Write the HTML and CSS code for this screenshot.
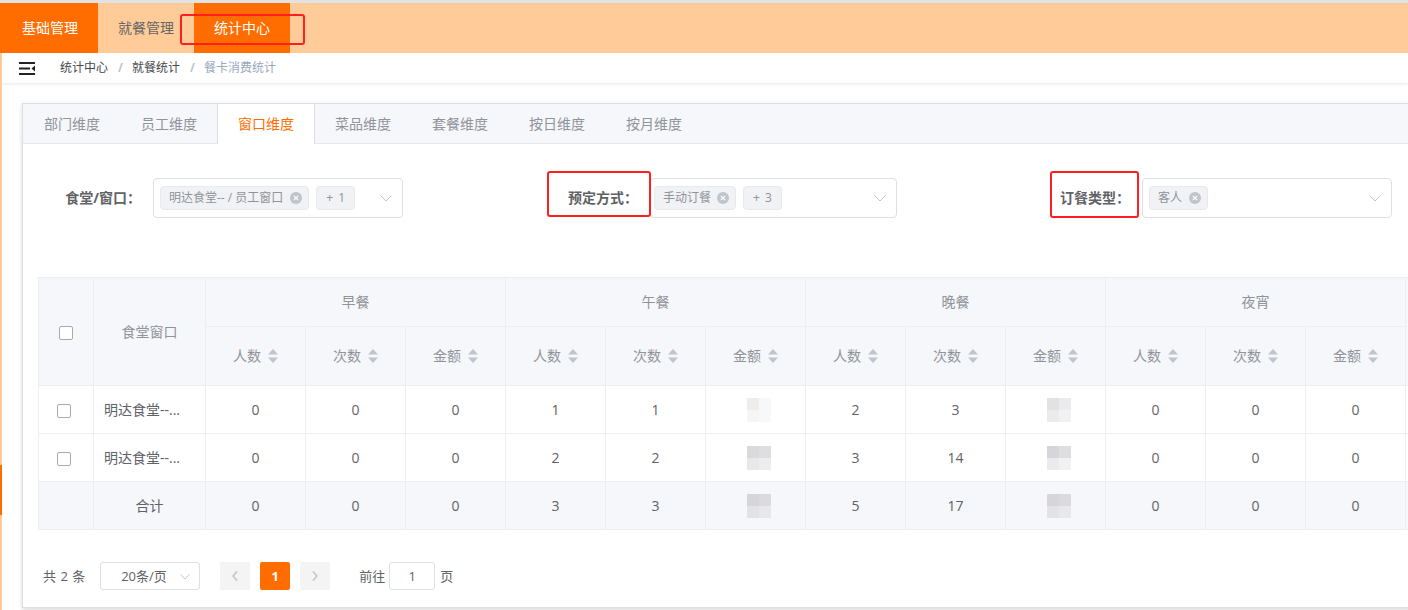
FILE: index.html
```html
<!DOCTYPE html>
<html lang="zh-CN">
<head>
<meta charset="utf-8">
<title>餐卡消费统计</title>
<link rel="stylesheet" href="styles.css">
</head>
<body>
<header class="topbar">
  <nav class="topnav">
    <a class="nav-item active">基础管理</a>
    <a class="nav-item">就餐管理</a>
    <a class="nav-item active">统计中心<span class="mark mark-nav"></span></a>
  </nav>
</header>
<div class="layout">
  <aside class="sidebar"><span class="sidebar-active"></span></aside>
  <main class="main">
    <div class="navbar">
      <svg class="hamburger" viewBox="0 0 16 13" width="16" height="13">
        <rect x="0" y="0" width="16" height="2" fill="#222"/>
        <rect x="0" y="5.5" width="11" height="2" fill="#222"/>
        <polygon points="16,3.5 12.5,6.5 16,9.5" fill="#222"/>
        <rect x="0" y="11" width="16" height="2" fill="#222"/>
      </svg>
      <div class="breadcrumb">
        <span class="crumb">统计中心</span><span class="sep">/</span>
        <span class="crumb">就餐统计</span><span class="sep">/</span>
        <span class="crumb last">餐卡消费统计</span>
      </div>
    </div>
    <div class="app-main">
      <div class="card">
        <div class="tabs-header">
          <div class="tab">部门维度</div>
          <div class="tab">员工维度</div>
          <div class="tab active">窗口维度</div>
          <div class="tab">菜品维度</div>
          <div class="tab">套餐维度</div>
          <div class="tab">按日维度</div>
          <div class="tab">按月维度</div>
        </div>
        <div class="tabs-content">
          <div class="filters">
            <div class="form-item">
              <label class="form-label">食堂/窗口：</label>
              <div class="select">
                <span class="tag">明达食堂-- / 员工窗口<svg class="tag-close" viewBox="0 0 12 12" width="12" height="12"><circle cx="6" cy="6" r="6" fill="#c0c4cc"/><path d="M3.8 3.8 L8.2 8.2 M8.2 3.8 L3.8 8.2" stroke="#fff" stroke-width="1.2"/></svg></span>
                <span class="tag tag-count">+ 1</span>
                <svg class="arrow" viewBox="0 0 12 7" width="12" height="7"><polyline points="0.5,0.5 6,6 11.5,0.5" fill="none" stroke="#c0c4cc" stroke-width="1"/></svg>
              </div>
            </div>
            <div class="form-item">
              <label class="form-label">预定方式：</label>
              <div class="select narrow">
                <span class="tag tag-tight">手动订餐<svg class="tag-close" viewBox="0 0 12 12" width="12" height="12"><circle cx="6" cy="6" r="6" fill="#c0c4cc"/><path d="M3.8 3.8 L8.2 8.2 M8.2 3.8 L3.8 8.2" stroke="#fff" stroke-width="1.2"/></svg></span>
                <span class="tag tag-count">+ 3</span>
                <svg class="arrow" viewBox="0 0 12 7" width="12" height="7"><polyline points="0.5,0.5 6,6 11.5,0.5" fill="none" stroke="#c0c4cc" stroke-width="1"/></svg>
              </div>
              <span class="mark mark-2"></span>
            </div>
            <div class="form-item">
              <label class="form-label">订餐类型：</label>
              <div class="select">
                <span class="tag">客人<svg class="tag-close" viewBox="0 0 12 12" width="12" height="12"><circle cx="6" cy="6" r="6" fill="#c0c4cc"/><path d="M3.8 3.8 L8.2 8.2 M8.2 3.8 L3.8 8.2" stroke="#fff" stroke-width="1.2"/></svg></span>
                <svg class="arrow" viewBox="0 0 12 7" width="12" height="7"><polyline points="0.5,0.5 6,6 11.5,0.5" fill="none" stroke="#c0c4cc" stroke-width="1"/></svg>
              </div>
              <span class="mark mark-3"></span>
            </div>
          </div>

          <div class="table-wrap">
            <table class="data-table">
              <colgroup>
                <col class="w-check"><col class="w-name">
                <col class="w-num"><col class="w-num"><col class="w-num">
                <col class="w-num"><col class="w-num"><col class="w-num">
                <col class="w-num"><col class="w-num"><col class="w-num">
                <col class="w-num"><col class="w-num"><col class="w-num">
                <col class="w-num">
              </colgroup>
              <thead>
                <tr class="hrow1">
                  <th rowspan="2"><span class="checkbox"></span></th>
                  <th rowspan="2">食堂窗口</th>
                  <th colspan="3">早餐</th>
                  <th colspan="3">午餐</th>
                  <th colspan="3">晚餐</th>
                  <th colspan="3">夜宵</th>
                  <th rowspan="2"></th>
                </tr>
                <tr class="hrow2">
                  <th><span class="sortable">人数<svg class="caret" viewBox="0 0 10 14" width="10" height="14"><polygon points="5,0 10,5.5 0,5.5" fill="#c0c4cc"/><polygon points="0,8.5 10,8.5 5,14" fill="#c0c4cc"/></svg></span></th>
                  <th><span class="sortable">次数<svg class="caret" viewBox="0 0 10 14" width="10" height="14"><polygon points="5,0 10,5.5 0,5.5" fill="#c0c4cc"/><polygon points="0,8.5 10,8.5 5,14" fill="#c0c4cc"/></svg></span></th>
                  <th><span class="sortable">金额<svg class="caret" viewBox="0 0 10 14" width="10" height="14"><polygon points="5,0 10,5.5 0,5.5" fill="#c0c4cc"/><polygon points="0,8.5 10,8.5 5,14" fill="#c0c4cc"/></svg></span></th>
                  <th><span class="sortable">人数<svg class="caret" viewBox="0 0 10 14" width="10" height="14"><polygon points="5,0 10,5.5 0,5.5" fill="#c0c4cc"/><polygon points="0,8.5 10,8.5 5,14" fill="#c0c4cc"/></svg></span></th>
                  <th><span class="sortable">次数<svg class="caret" viewBox="0 0 10 14" width="10" height="14"><polygon points="5,0 10,5.5 0,5.5" fill="#c0c4cc"/><polygon points="0,8.5 10,8.5 5,14" fill="#c0c4cc"/></svg></span></th>
                  <th><span class="sortable">金额<svg class="caret" viewBox="0 0 10 14" width="10" height="14"><polygon points="5,0 10,5.5 0,5.5" fill="#c0c4cc"/><polygon points="0,8.5 10,8.5 5,14" fill="#c0c4cc"/></svg></span></th>
                  <th><span class="sortable">人数<svg class="caret" viewBox="0 0 10 14" width="10" height="14"><polygon points="5,0 10,5.5 0,5.5" fill="#c0c4cc"/><polygon points="0,8.5 10,8.5 5,14" fill="#c0c4cc"/></svg></span></th>
                  <th><span class="sortable">次数<svg class="caret" viewBox="0 0 10 14" width="10" height="14"><polygon points="5,0 10,5.5 0,5.5" fill="#c0c4cc"/><polygon points="0,8.5 10,8.5 5,14" fill="#c0c4cc"/></svg></span></th>
                  <th><span class="sortable">金额<svg class="caret" viewBox="0 0 10 14" width="10" height="14"><polygon points="5,0 10,5.5 0,5.5" fill="#c0c4cc"/><polygon points="0,8.5 10,8.5 5,14" fill="#c0c4cc"/></svg></span></th>
                  <th><span class="sortable">人数<svg class="caret" viewBox="0 0 10 14" width="10" height="14"><polygon points="5,0 10,5.5 0,5.5" fill="#c0c4cc"/><polygon points="0,8.5 10,8.5 5,14" fill="#c0c4cc"/></svg></span></th>
                  <th><span class="sortable">次数<svg class="caret" viewBox="0 0 10 14" width="10" height="14"><polygon points="5,0 10,5.5 0,5.5" fill="#c0c4cc"/><polygon points="0,8.5 10,8.5 5,14" fill="#c0c4cc"/></svg></span></th>
                  <th><span class="sortable">金额<svg class="caret" viewBox="0 0 10 14" width="10" height="14"><polygon points="5,0 10,5.5 0,5.5" fill="#c0c4cc"/><polygon points="0,8.5 10,8.5 5,14" fill="#c0c4cc"/></svg></span></th>
                </tr>
              </thead>
              <tbody>
                <tr>
                  <td class="cell-check"><span class="checkbox"></span></td>
                  <td class="cell-name">明达食堂--...</td>
                  <td>0</td><td>0</td><td>0</td>
                  <td>1</td><td>1</td>
                  <td><span class="mosaic"><i class="px c1"></i><i class="px c2"></i><i class="px c3"></i><i class="px c2"></i></span></td>
                  <td>2</td><td>3</td>
                  <td><span class="mosaic"><i class="px c4"></i><i class="px c5"></i><i class="px c5"></i><i class="px c6"></i></span></td>
                  <td>0</td><td>0</td><td>0</td>
                  <td></td>
                </tr>
                <tr>
                  <td class="cell-check"><span class="checkbox"></span></td>
                  <td class="cell-name">明达食堂--...</td>
                  <td>0</td><td>0</td><td>0</td>
                  <td>2</td><td>2</td>
                  <td><span class="mosaic"><i class="px c7"></i><i class="px c8"></i><i class="px c9"></i><i class="px c10"></i></span></td>
                  <td>3</td><td>14</td>
                  <td><span class="mosaic"><i class="px c11"></i><i class="px c8"></i><i class="px c5"></i><i class="px c6"></i></span></td>
                  <td>0</td><td>0</td><td>0</td>
                  <td></td>
                </tr>
                <tr class="sum-row">
                  <td></td>
                  <td>合计</td>
                  <td>0</td><td>0</td><td>0</td>
                  <td>3</td><td>3</td>
                  <td><span class="mosaic"><i class="px c11"></i><i class="px c12"></i><i class="px c13"></i><i class="px c14"></i></span></td>
                  <td>5</td><td>17</td>
                  <td><span class="mosaic"><i class="px c11"></i><i class="px c12"></i><i class="px c13"></i><i class="px c14"></i></span></td>
                  <td>0</td><td>0</td><td>0</td>
                  <td></td>
                </tr>
              </tbody>
            </table>
          </div>

          <div class="pagination">
            <span class="total">共 2 条</span>
            <div class="sizes">20条/页<svg class="arrow-sm" viewBox="0 0 10 6" width="10" height="6"><polyline points="0.5,0.5 5,5 9.5,0.5" fill="none" stroke="#c0c4cc" stroke-width="1"/></svg></div>
            <button class="pg-btn" type="button"><svg viewBox="0 0 6 10" width="6" height="10"><polyline points="5,0.5 1,5 5,9.5" fill="none" stroke="#c0c4cc" stroke-width="1.6"/></svg></button>
            <span class="pg-num active">1</span>
            <button class="pg-btn" type="button"><svg viewBox="0 0 6 10" width="6" height="10"><polyline points="1,0.5 5,5 1,9.5" fill="none" stroke="#c0c4cc" stroke-width="1.6"/></svg></button>
            <span class="jump">前往</span>
            <span class="jump-input">1</span>
            <span class="jump-unit">页</span>
          </div>
        </div>
      </div>
    </div>
  </main>
</div>
</body>
</html>
```

FILE: styles.css
```css
* { box-sizing: border-box; }

html, body {
  margin: 0;
  padding: 0;
  width: 1408px;
  height: 610px;
  overflow: hidden;
}

body {
  font-family: "Open Sans", "Noto Sans CJK SC", sans-serif;
  font-size: 14px;
  color: #606266;
  background: #fff;
}

/* ---------- top bar ---------- */
.topbar {
  height: 53px;
  border-top: 3px solid #e2e2e2;
  background: #ffcc99;
}

.topnav {
  display: flex;
  height: 50px;
}

.nav-item {
  position: relative;
  display: flex;
  align-items: center;
  height: 50px;
  padding: 0 20px;
  color: #666;
  font-size: 14px;
  line-height: 20px;
  text-decoration: none;
}

.nav-item:first-child { padding-left: 22px; }

.nav-item.active {
  background: #ff6d00;
  color: #fff;
}

.mark {
  position: absolute;
  border: 2px solid #ff1f1f;
  border-radius: 3px;
  pointer-events: none;
}

.mark-nav {
  left: -14px;
  right: -15px;
  top: 11px;
  height: 31px;
}

/* ---------- layout ---------- */
.layout {
  display: flex;
  height: 557px;
}

.sidebar {
  flex: none;
  width: 2px;
  background: #ffcc99;
  padding-top: 412px;
}

.sidebar-active {
  display: block;
  height: 50px;
  background: #ff6d00;
}

.main {
  flex: 1;
  min-width: 0;
  overflow: hidden;
}

.navbar {
  position: relative;
  display: flex;
  align-items: center;
  height: 30px;
  background: #fff;
  box-shadow: 0 1px 3px rgba(0, 21, 41, 0.10);
}

.hamburger {
  flex: none;
  margin-left: 17px;
  display: block;
}

.breadcrumb {
  display: flex;
  align-items: center;
  margin-left: 25px;
  font-size: 12px;
  line-height: 16px;
}

.crumb { color: #45474c; }
.crumb.last { color: #97a8be; }

.sep {
  margin: 0 9px 0 10px;
  color: #c0c4cc;
  font-weight: 700;
}

.app-main {
  padding: 20px 0 0 20px;
}

/* ---------- card / tabs ---------- */
.card {
  width: 1420px;
  height: 505px;
  background: #fff;
  border: 1px solid #dcdfe6;
  box-shadow: 0 2px 4px 0 rgba(0, 0, 0, 0.12), 0 0 6px 0 rgba(0, 0, 0, 0.04);
}

.tabs-header {
  display: flex;
  height: 40px;
  background: #f5f7fa;
  border-bottom: 1px solid #e4e7ed;
}

.tab {
  height: 40px;
  line-height: 39px;
  padding: 0 20px;
  margin-left: -1px;
  border-left: 1px solid transparent;
  border-right: 1px solid transparent;
  color: #909399;
  font-size: 14px;
}

.tab:first-child { margin-left: 0; }

.tab.active {
  background: #fff;
  color: #ff6d00;
  border-left-color: #dcdfe6;
  border-right-color: #dcdfe6;
}

.tabs-content {
  padding: 15px;
}

/* ---------- filters ---------- */
.filters {
  display: grid;
  grid-template-columns: 497px 492px 360px;
  margin-top: 19px;
  padding-left: 15px;
  height: 40px;
}

.form-item {
  position: relative;
  display: flex;
  align-items: center;
  height: 40px;
}

.form-label {
  flex: none;
  width: 100px;
  padding-right: 12px;
  text-align: right;
  font-weight: 700;
  color: #606266;
  font-size: 14px;
  line-height: 20px;
}

.select {
  position: relative;
  flex: none;
  display: flex;
  align-items: center;
  gap: 7px;
  width: 250px;
  height: 40px;
  padding-left: 6px;
  border: 1px solid #dcdfe6;
  border-radius: 4px;
  background: #fff;
}

.select.narrow {
  width: 247px;
  padding-left: 3px;
}

.tag {
  display: inline-flex;
  align-items: center;
  height: 24px;
  padding: 0 8px;
  background: #f0f2f5;
  border: 1px solid #e9e9eb;
  border-radius: 4px;
  color: #909399;
  font-size: 12px;
  line-height: 22px;
  white-space: nowrap;
}

.tag-count {
  padding: 0 9px;
  word-spacing: 2px;
}

.tag-close {
  margin-left: 7px;
  margin-right: -2px;
  display: block;
}

.tag-tight .tag-close { margin-left: 6px; }

.arrow {
  position: absolute;
  right: 10px;
  top: 16px;
  display: block;
}

.mark-2 {
  left: -3px;
  top: -7px;
  width: 104px;
  height: 46px;
}

.mark-3 {
  left: 8px;
  top: -7px;
  width: 89px;
  height: 47px;
}

/* ---------- table ---------- */
.table-wrap {
  margin-top: 59px;
  width: 1380px;
  overflow: hidden;
}

.data-table {
  table-layout: fixed;
  width: 1468px;
  border-collapse: separate;
  border-spacing: 0;
  border-top: 1px solid #ebeef5;
  border-left: 1px solid #ebeef5;
}

.w-check { width: 55px; }
.w-name { width: 112px; }
.w-num { width: 100px; }

.data-table th,
.data-table td {
  padding: 0;
  text-align: center;
  vertical-align: middle;
  border-right: 1px solid #ebeef5;
  border-bottom: 1px solid #ebeef5;
  font-size: 14px;
  line-height: 20px;
  white-space: nowrap;
  overflow: hidden;
}

.data-table th {
  background: #f5f7fa;
  color: #909399;
  font-weight: 400;
}

.hrow1 th { height: 49px; }
.hrow2 th { height: 59px; }

.data-table td {
  height: 48px;
  color: #606266;
  background: #fff;
}

.data-table .sum-row td { background: #f5f7fa; }

.cell-name {
  text-align: left !important;
  padding-left: 10px !important;
}

.cell-check { padding-right: 4px !important; }

.checkbox {
  display: inline-block;
  width: 14px;
  height: 14px;
  border: 1px solid #a9a9a9;
  border-radius: 2px;
  background: #fff;
  vertical-align: middle;
}

.sortable {
  display: inline-flex;
  align-items: center;
  gap: 7px;
}

.caret { display: block; }

.mosaic {
  display: inline-grid;
  grid-template-columns: 12px 12px;
  grid-template-rows: 12px 12px;
  margin-left: 6px;
  vertical-align: middle;
}

.px { display: block; }
.c1 { background: #eeedeb; }
.c2 { background: #f7f8fa; }
.c3 { background: #f6f5f3; }
.c4 { background: #e2e2e2; }
.c5 { background: #ebebed; }
.c6 { background: #f1f1f3; }
.c7 { background: #dadadc; }
.c8 { background: #dedee0; }
.c9 { background: #e8e8ea; }
.c10 { background: #ededef; }
.c11 { background: #d6d6da; }
.c12 { background: #dbdbdf; }
.c13 { background: #e3e3e7; }
.c14 { background: #e8e8ec; }

/* ---------- pagination ---------- */
.pagination {
  display: flex;
  align-items: center;
  height: 28px;
  margin-top: 32px;
  padding-left: 5px;
  font-size: 13px;
  color: #606266;
  line-height: 28px;
}

.total {
  margin-right: 15px;
  word-spacing: 1px;
}

.sizes {
  position: relative;
  width: 100px;
  height: 28px;
  margin-right: 20px;
  padding-left: 20px;
  border: 1px solid #dcdfe6;
  border-radius: 3px;
  line-height: 26px;
  color: #606266;
}

.arrow-sm {
  position: absolute;
  right: 9px;
  top: 11px;
  display: block;
}

.pg-btn {
  display: flex;
  align-items: center;
  justify-content: center;
  width: 30px;
  height: 28px;
  margin: 0 5px;
  padding: 0;
  border: 0;
  border-radius: 2px;
  background: #f4f4f5;
}

.pg-btn:first-of-type { margin-left: 0; }

.pg-btn svg { display: block; }

.pg-num {
  width: 30px;
  height: 28px;
  margin: 0 5px;
  text-align: center;
  border-radius: 2px;
  font-weight: 700;
}

.pg-num.active {
  background: #ff6d00;
  color: #fff;
}

.jump { margin-left: 24px; }

.jump-input {
  width: 46px;
  height: 28px;
  margin-left: 4px;
  border: 1px solid #dcdfe6;
  border-radius: 3px;
  text-align: center;
  line-height: 26px;
}

.jump-unit { margin-left: 5px; }
```
